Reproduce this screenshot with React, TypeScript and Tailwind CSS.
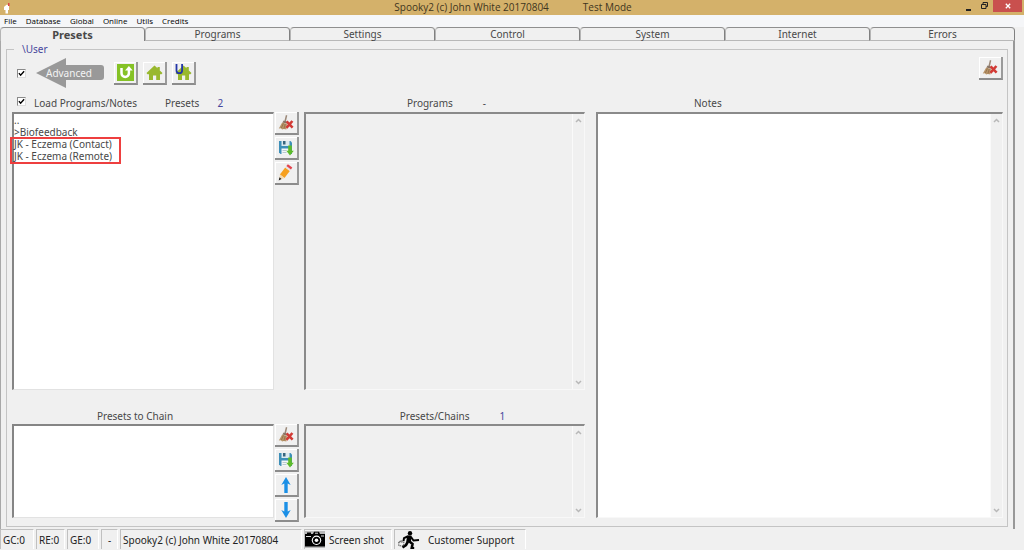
import { useState, type ReactNode } from "react";

const menus = ["File", "Database", "Global", "Online", "Utils", "Credits"];
const tabs = ["Presets", "Programs", "Settings", "Control", "System", "Internet", "Errors"];

function IconButton({ label, children }: { label: string; children: ReactNode }) {
  return (
    <button
      type="button"
      aria-label={label}
      className="flex h-[23px] w-6 shrink-0 items-center justify-center border-r-2 border-b-2 border-r-[#9a9a9a] border-b-[#8c8c8c] bg-[#f0f0f0] shadow-[inset_1px_1px_0_#ffffff]"
    >
      {children}
    </button>
  );
}

function BroomIcon() {
  return (
    <svg width="18" height="18" viewBox="0 0 18 18" aria-hidden="true">
      <path d="M9.6 1.2 8.2 7" stroke="#9b8878" strokeWidth="1.5" fill="none" />
      <path d="M6.6 6.4 9.6 7.2 9.8 9.8 5.4 8.4Z" fill="#8a7768" />
      <path d="M5.2 8.4 9.9 9.9 9.4 15.6 6.8 14.9 5.2 15.6 3.8 14.2 1.8 14.4Z" fill="#b79468" />
      <path d="M6.4 9.4 4.4 14M8.2 10 7 14.6" stroke="#8f6d48" strokeWidth=".8" fill="none" />
      <path d="M9.6 7.4 15.6 13.6M15.4 7 9.4 13.8" stroke="#d23a35" strokeWidth="2.6" />
    </svg>
  );
}

function SaveIcon() {
  return (
    <svg width="16" height="16" viewBox="0 0 16 16" aria-hidden="true">
      <path d="M1 1h11.5L14 2.5V14H2.500L1 12.500Z" fill="#3d8fb8" />
      <path d="M3.500 1h8v5h-8Z" fill="#dbe9ef" />
      <path d="M5 1h2.500v3.500H5Z" fill="#37657d" />
      <path d="M3.500 8.500h8V14h-8Z" fill="#f4f7f8" />
      <path d="M4.500 10.500h4M4.500 12.500h4" stroke="#a9bcc5" strokeWidth=".8" />
      <path d="M10.200 5.500h3.600v5.300h2L12 15.500 8.300 10.800h1.900Z" fill="#5dbb2a" />
    </svg>
  );
}

function PencilIcon() {
  return (
    <svg width="18" height="18" viewBox="0 0 18 18" aria-hidden="true">
      <path d="m8.200 3.600 4.600 3.400-5.300 7-4.600-3.400Z" fill="#f6a01f" />
      <path d="m8.200 3.600 1.200-1.600 4.600 3.400-1.200 1.600Z" fill="#e8e3e3" />
      <path d="m9.400 2 1.500-1.700 4.400 3.300L14 5.400Z" fill="#e4434d" />
      <path d="m2.900 10.600 4.600 3.400-5.400 2.200Z" fill="#f4d9b0" />
      <path d="m2.500 13.300 2 1.700-2.800 1.500Z" fill="#222" />
    </svg>
  );
}

function ArrowIcon({ down = false }: { down?: boolean }) {
  return (
    <svg width="12" height="18" viewBox="0 0 12 18" aria-hidden="true">
      <path
        d={down ? "M4.300 1h3.400v9.500l3-1.500L6 17 1.300 9l3 1.500Z" : "M4.300 17h3.400V7.500l3 1.500L6 1 1.300 9l3-1.500Z"}
        fill="#1a8fe6"
      />
    </svg>
  );
}

function ReturnIcon() {
  return (
    <svg width="17" height="17" viewBox="0 0 17 17" aria-hidden="true">
      <path d="M0 0h17v17H0Z" fill="#85c226" />
      <path d="M4.500 4v5.200a3.700 3.700 0 0 0 7.400 0V6" fill="none" stroke="#fff" strokeWidth="2.500" />
      <path d="M8 6.500 11.900 2l3.800 4.500Z" fill="#fff" />
    </svg>
  );
}

function HomeIcon({ marked = false }: { marked?: boolean }) {
  return (
    <svg width="17" height="17" viewBox="0 0 17 17" aria-hidden="true">
      <path d="M8.500 1.500 11.500 4.300V3h2.300v3.500l2.700 2.500-1 1.200H14V16h-3.800v-4.500H7V16H3v-5.800H1.500L.5 9Z" fill="#99b82e" />
      {marked && (
        <path d="M1.500 0v6.400a2.800 2.800 0 0 0 5.600 0V0" fill="none" stroke="#2336a8" strokeWidth="1.800" />
      )}
    </svg>
  );
}

function CameraIcon() {
  return (
    <svg width="20" height="17" viewBox="0 0 20 17" aria-hidden="true">
      <path d="M0 0h20v17H0Z" fill="#b9b9b9" />
      <path d="M0 3h2V1.500h4V3h2L9 .8h5L15 3h5v12.500H0Z" fill="#000" />
      <path d="M1 5.500h5M10 2.200h3M16 5h3" stroke="#ddd" strokeWidth="1" />
      <circle cx="11.500" cy="9.300" r="4.700" fill="#fff" />
      <circle cx="11.500" cy="9.300" r="3.600" fill="#000" />
      <circle cx="11.500" cy="9.300" r="1.800" fill="#fff" />
    </svg>
  );
}

function RunnerIcon() {
  return (
    <svg width="22" height="18" viewBox="0 0 22 18" aria-hidden="true">
      <circle cx="12" cy="2.300" r="2.200" fill="#000" />
      <path d="m11.500 4.500-1 6.500" stroke="#000" strokeWidth="4.600" />
      <path d="M9.500 5.500 6 7.200l-.5 3M13 6l2.500 3.500 5.500-.5" fill="none" stroke="#000" strokeWidth="2" />
      <path d="m11.500 10.500 3 2.500-.8 4.300h2.500M10 10.500 8 14l-3.500 2.500" fill="none" stroke="#000" strokeWidth="2.600" />
      <path d="M.8 11h5v3.800h-5ZM2.200 11V9.800h2V11" fill="none" stroke="#444" strokeWidth=".9" strokeDasharray="1.500 .8" />
    </svg>
  );
}

function Chevron({ down = false }: { down?: boolean }) {
  return (
    <svg width="7" height="5" viewBox="0 0 7 5" aria-hidden="true">
      <path d={down ? "m1 1 2.500 2.500L6 1" : "M1 4 3.500 1.500 6 4"} fill="none" stroke="#b8b8b8" strokeWidth="1.500" />
    </svg>
  );
}

function ScrollBox({ label, white = false }: { label: string; white?: boolean }) {
  return (
    <div className="flex h-full border-t-2 border-l-2 border-r border-b border-t-[#8a8a8a] border-l-[#8a8a8a] border-r-[#f8f8f8] border-b-[#f8f8f8]">
      <textarea
        aria-label={label}
        readOnly
        className={`block min-w-0 flex-1 resize-none outline-none ${white ? "bg-white" : "bg-[#f0f0f0]"}`}
      />
      <div className="flex w-3 shrink-0 flex-col items-center justify-between border-l border-[#fafafa] bg-[#f0f0f0] py-1">
        <Chevron />
        <Chevron down />
      </div>
    </div>
  );
}

const listFrame =
  "h-full border-t-2 border-l-2 border-r border-b border-t-[#858585] border-l-[#858585] border-r-[#e2e2e2] border-b-[#e2e2e2] bg-white";

function Tick({ id }: { id: string }) {
  return (
    <input
      id={id}
      type="checkbox"
      defaultChecked
      className="block size-[9px] shrink-0 appearance-none border border-[#8a8a8a] border-r-[#dddddd] border-b-[#dddddd] bg-white checked:bg-[url('data:image/svg+xml,%3Csvg%20xmlns=%22http://www.w3.org/2000/svg%22%20viewBox=%220%200%208%208%22%3E%3Cpath%20d=%22M1%203.500%203%206%207%201.500%22%20fill=%22none%22%20stroke=%22black%22%20stroke-width=%221.600%22/%3E%3C/svg%3E')]"
    />
  );
}

export default function App() {
  const [active, setActive] = useState("Presets");

  return (
    <div className="flex h-screen min-h-[480px] flex-col bg-[#f0f0f0] font-['Noto_Sans',sans-serif] text-[10px] leading-4 text-[#484848]">
      <header className="flex h-[15px] shrink-0 items-center bg-[#d4b16a] text-[#3f3520]">
        <div className="flex flex-1 pl-1">
          <svg width="6" height="12" viewBox="0 0 6 12" aria-hidden="true">
            <path d="M1 4 3 2.500 5 4v4H4v3.500H1.500V8H0V5Z" fill="#fff" />
            <path d="M4 1h1.500v3H4Z" fill="#d44" />
          </svg>
        </div>
        <h1 className="flex gap-[34px] font-['Open_Sans',sans-serif] text-[10px] leading-[15px]">
          <span>Spooky2 (c) John White 20170804</span>
          <span>Test Mode</span>
        </h1>
        <div className="flex h-full flex-1 justify-end pr-0.5">
          <button type="button" aria-label="Minimize" className="flex w-4 items-center justify-center pt-1">
            <svg width="5" height="2" aria-hidden="true"><path d="M0 0h5v2H0Z" fill="#222" /></svg>
          </button>
          <button type="button" aria-label="Restore" className="flex w-[17px] items-center justify-center pb-1">
            <svg width="7" height="7" viewBox="0 0 7 7" aria-hidden="true">
              <path d="M2 2V.5h4.500v4H5M.5 2.500H5v4H.5Z" fill="none" stroke="#222" strokeWidth="1" />
            </svg>
          </button>
          <button type="button" aria-label="Close" className="mb-[3px] flex w-[29px] items-center justify-center bg-[#c9504e]">
            <svg width="6" height="6" viewBox="0 0 6 6" aria-hidden="true">
              <path d="m.8.8 4.400 4.400M5.200.8.8 5.200" stroke="#fff" strokeWidth="1.300" />
            </svg>
          </button>
        </div>
      </header>

      <nav className="flex h-3 shrink-0 items-center gap-[9px] bg-[#f5f6f8] pl-1 font-['Open_Sans',sans-serif] text-[8px] leading-3 text-black">
        {menus.map((m) => (
          <button key={m} type="button">{m}</button>
        ))}
      </nav>

      <main className="mr-[9px] flex min-h-0 flex-1 flex-col">
        <div role="tablist" className="flex h-3.5 shrink-0">
          {tabs.map((t) => (
            <button
              key={t}
              type="button"
              role="tab"
              aria-selected={active === t}
              onClick={() => setActive(t)}
              className={`flex flex-1 items-center justify-center rounded-t-[4px] border-t border-r border-l border-t-[#8f8f8f] border-r-[#808080] border-l-[#b5b5b5] leading-3 ${
                active === t ? "text-[11px] font-bold" : "border-b border-b-[#b8b8b8]"
              }`}
            >
              {t}
            </button>
          ))}
        </div>

        <div className="flex min-h-0 flex-1 flex-col border-r-2 border-l border-r-[#989898] border-l-[#a8a8a8] pr-[5px] pb-0.5 pl-[5px]">
          <fieldset className="flex min-h-0 flex-1 flex-col border border-[#c4c4c4] pr-1 pb-2 pl-[5px]">
            <legend className="ml-0.5 pr-3 pl-2 text-[#46469c]">\User</legend>

            <div className="flex h-[38px] shrink-0 items-start">
              <div className="flex h-8 items-center pl-[5px]">
                <Tick id="advanced" />
                <label htmlFor="advanced" className="relative ml-2.5 flex h-8 w-[68px] items-center pl-2.5 text-[#f4f4f4]">
                  <svg className="absolute inset-0 size-full" viewBox="0 0 68 32" aria-hidden="true">
                    <path d="M0 16 30 1v7h35q3 0 3 3v9q0 3-3 3H30v8Z" fill="#999" />
                  </svg>
                  <span className="relative">Advanced</span>
                </label>
                <div className="ml-2.5 flex gap-[5px]">
                  <IconButton label="Up one folder"><ReturnIcon /></IconButton>
                  <IconButton label="Home"><HomeIcon /></IconButton>
                  <IconButton label="User home"><HomeIcon marked /></IconButton>
                </div>
              </div>
              <div className="ml-auto">
                <IconButton label="Clear all"><BroomIcon /></IconButton>
              </div>
            </div>

            <div className="grid min-h-0 flex-1 grid-cols-[262fr_25px_297fr_407fr] grid-rows-[17px_minmax(0,1fr)_34px_94px]">
              <div className="flex items-start pl-[5px]">
                <div className="pt-0.5"><Tick id="load" /></div>
                <label htmlFor="load" className="ml-2 whitespace-nowrap">Load Programs/Notes</label>
                <span className="ml-7">Presets</span>
                <span className="ml-[18px] text-[#46469c]">2</span>
              </div>
              <div />
              <div className="mr-[11px] ml-[5px] flex justify-center gap-[30px] pl-1">
                <span>Programs</span>
                <span>-</span>
              </div>
              <div className="pl-[98px]">Notes</div>

              <div className="relative min-h-0">
                <ul aria-label="Presets" className={`${listFrame} leading-3`}>
                  <li>..</li>
                  <li>&gt;Biofeedback</li>
                  <li>JK - Eczema (Contact)</li>
                  <li>JK - Eczema (Remote)</li>
                </ul>
                <div className="pointer-events-none absolute top-[25px] -left-0.5 h-[27px] w-[111px] border-2 border-[#ee3f3f]" />
              </div>
              <div className="flex flex-col gap-0.5 pl-px">
                <IconButton label="Clear presets"><BroomIcon /></IconButton>
                <IconButton label="Save preset"><SaveIcon /></IconButton>
                <IconButton label="Edit preset"><PencilIcon /></IconButton>
              </div>
              <div className="mr-[11px] ml-[5px]"><ScrollBox label="Programs" /></div>
              <div className="row-span-3"><ScrollBox label="Notes" white /></div>

              <div className="flex items-end justify-center pr-4">Presets to Chain</div>
              <div />
              <div className="mr-[11px] ml-[5px] flex items-end justify-center gap-[30px] pl-4">
                <span>Presets/Chains</span>
                <span className="text-[#46469c]">1</span>
              </div>

              <div className={listFrame} role="listbox" aria-label="Presets to Chain" />
              <div className="flex flex-col gap-0.5 pl-px">
                <IconButton label="Clear chain"><BroomIcon /></IconButton>
                <IconButton label="Save chain"><SaveIcon /></IconButton>
                <IconButton label="Move up"><ArrowIcon /></IconButton>
                <IconButton label="Move down"><ArrowIcon down /></IconButton>
              </div>
              <div className="mr-[11px] ml-[5px]"><ScrollBox label="Presets/Chains" /></div>
            </div>
          </fieldset>
        </div>
      </main>

      <footer className="flex h-[21px] shrink-0 gap-0.5 pb-px text-[#222] *:flex *:items-center *:border-t *:border-r *:border-l *:border-t-[#c0c0c0] *:border-r-white *:border-l-[#c0c0c0] *:whitespace-nowrap">
        <span className="w-[34px] pl-0.5">GC:0</span>
        <span className="w-[29px] pl-0.5">RE:0</span>
        <span className="w-[32px] pl-0.5">GE:0</span>
        <span className="w-[17px] justify-center">-</span>
        <span className="w-[182px] pl-0.5">Spooky2 (c) John White 20170804</span>
        <button type="button" className="w-[88px] gap-1"><CameraIcon />Screen shot</button>
        <button type="button" className="w-[132px] gap-2 pl-[3px]"><RunnerIcon />Customer Support</button>
      </footer>
    </div>
  );
}
